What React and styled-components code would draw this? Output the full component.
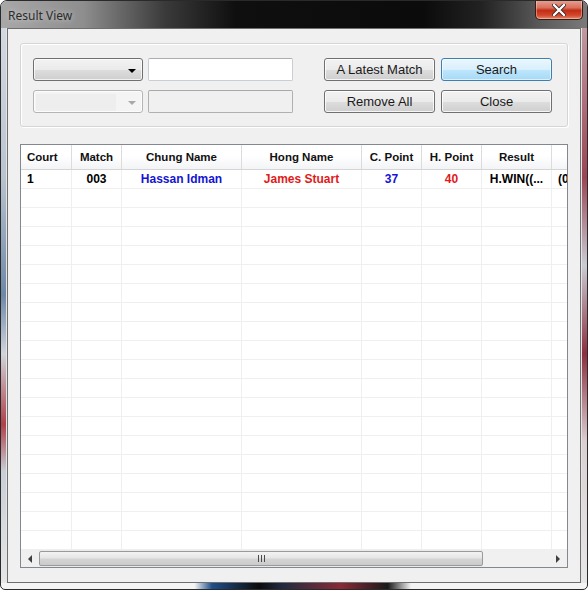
import React from 'react';
import styled, { createGlobalStyle } from 'styled-components';

const GlobalStyle = createGlobalStyle`
    html, body {
        margin: 0;
        padding: 0;
        background: #ffffff;
    }
    * {
        box-sizing: border-box;
    }
`

const Window = styled.div`
    width: 588px;
    height: 590px;
    display: flex;
    flex-direction: column;
    padding: 0 6px 6px 6px;
    border: 1px solid #2a2a2a;
    border-radius: 7px 7px 5px 5px;
    overflow: hidden;
    font-family: "Liberation Sans", Arial, sans-serif;
    background:
        linear-gradient(90deg, #f4f4f4 0%, #f4f4f4 33%, #1f4f8a 36%, #0c0c0c 44%, #202a40 48%, #8a2a36 58%, #1a1a1a 66%, #f4f4f4 70%, #f4f4f4 100%) bottom / 100% 6px no-repeat,
        linear-gradient(180deg, #d8dde4 0%, #b9c3d0 30%, #6d88a8 50%, #d0d5dc 60%, #b0404a 72%, #c8ced6 80%, #e8e8e8 100%) left / 5px 100% no-repeat,
        linear-gradient(180deg, #c7a8ae 0%, #9a4656 30%, #c9ccd4 45%, #8c3040 60%, #dad0d2 75%, #e8e8e8 100%) right / 5px 100% no-repeat,
        #e4e4e4;
`

const TitleBar = styled.div`
    height: 28px;
    margin: 0 -6px;
    padding: 0 4px 0 7px;
    display: flex;
    align-items: flex-start;
    justify-content: space-between;
    background: linear-gradient(90deg, #a8a8a8 0%, #8e8e8e 14%, #3a3a3a 28%, #0f0f0f 40%, #0b0b0b 72%, #222 82%, #5a5a5a 92%, #7a7a7a 100%);
`

const Title = styled.span`
    margin-top: 6px;
    font-family: "Noto Sans", "DejaVu Sans", sans-serif;
    font-size: 12px;
    color: #2c2c2c;
    text-shadow: 0 0 6px rgba(255,255,255,0.6);
`

const CloseButton = styled.div`
    width: 48px;
    height: 20px;
    margin-top: -1px;
    border: 1px solid #3a1a14;
    border-top: none;
    border-radius: 0 0 5px 5px;
    display: flex;
    align-items: center;
    justify-content: center;
    background: linear-gradient(180deg, #e8a496 0%, #d9705c 40%, #c22d16 55%, #d2462c 80%, #e08a6c 100%);
    box-shadow: inset 0 0 0 1px rgba(255,255,255,0.35);
`

const Client = styled.div`
    flex: 1;
    display: flex;
    flex-direction: column;
    gap: 17px;
    padding: 14px 12px 14px 12px;
    background: #f0f0f0;
    border: 1px solid #6e6e6e;
`

const GroupBox = styled.div`
    height: 84px;
    display: flex;
    justify-content: space-between;
    padding: 14px 15px 0 12px;
    border: 1px solid #d5d5d5;
    border-radius: 3px;
    box-shadow: inset 1px 1px 0 #ffffff, 1px 1px 0 #ffffff;
`

const Grid = styled.div`
    display: grid;
    grid-template-columns: ${p => p.cols};
    grid-auto-rows: 23px;
    column-gap: ${p => p.gap}px;
    row-gap: 9px;
`

const Combo = styled.div`
    border: 1px solid ${p => (p.disabled ? '#b5b5b5' : '#707070')};
    border-radius: 3px;
    background: ${p => (p.disabled
        ? 'linear-gradient(#f4f4f4, #f4f4f4)'
        : 'linear-gradient(180deg, #f2f2f2 0%, #ebebeb 50%, #dddddd 51%, #cfcfcf 100%)')};
    box-shadow: inset 0 0 0 1px ${p => (p.disabled ? '#fcfcfc' : 'rgba(255,255,255,0.7)')};
    display: flex;
    align-items: center;
    justify-content: flex-end;
    padding: 2px 6px 0 2px;
`

const ComboFace = styled.div`
    flex: 1;
    height: 17px;
    margin-right: 12px;
    background: #eeeeee;
`

const Arrow = styled.span`
    width: 0;
    height: 0;
    border-left: 4px solid transparent;
    border-right: 4px solid transparent;
    border-top: 4px solid ${p => (p.disabled ? '#a8a8a8' : '#000')};
`

const TextBox = styled.div`
    border: 1px solid ${p => (p.disabled ? '#b0b0b0' : '#c9cdd4')};
    border-top-color: ${p => (p.disabled ? '#a8a8a8' : '#abadb3')};
    border-radius: 2px;
    background: ${p => (p.disabled ? '#f0f0f0' : '#ffffff')};
`

const Button = styled.button`
    margin: 0;
    padding: 0;
    font-family: "Liberation Sans", Arial, sans-serif;
    font-size: 13px;
    color: #1a1a1a;
    border: 1px solid ${p => (p.primary ? '#3c7fb1' : '#707070')};
    border-radius: 3px;
    background: ${p => (p.primary
        ? 'linear-gradient(180deg, #eaf6fd 0%, #d9f0fc 50%, #bee6fd 51%, #a7d9f5 100%)'
        : 'linear-gradient(180deg, #f2f2f2 0%, #ebebeb 50%, #dddddd 51%, #cfcfcf 100%)')};
    box-shadow: inset 0 0 0 1px ${p => (p.primary ? 'rgba(255,255,255,0.6)' : 'rgba(255,255,255,0.8)')};
`

const ListView = styled.div`
    flex: 1;
    display: flex;
    flex-direction: column;
    border: 1px solid #828790;
    background: #ffffff;
    overflow: hidden;
`

const columns = '51px 50px 120px 120px 60px 60px 70px 80px';

const HeaderRow = styled.div`
    display: grid;
    grid-template-columns: ${columns};
    height: 25px;
    flex-shrink: 0;
    background: linear-gradient(180deg, #ffffff 0%, #ffffff 45%, #f3f4f6 100%);
    border-bottom: 1px solid #d5d5d5;
`

const HeaderCell = styled.div`
    display: flex;
    align-items: center;
    justify-content: ${p => (p.left ? 'flex-start' : 'center')};
    padding-left: ${p => (p.left ? '6px' : '0')};
    border-right: 1px solid #dcdcdc;
    font-size: 11.5px;
    font-weight: bold;
    color: #111;
    white-space: nowrap;
`

const Body = styled.div`
    flex: 1;
    overflow: hidden;
`

const Row = styled.div`
    display: grid;
    grid-template-columns: ${columns};
    height: 19px;
    border-bottom: 1px solid #efefef;
`

const Cell = styled.div`
    display: flex;
    align-items: center;
    justify-content: ${p => (p.left ? 'flex-start' : 'center')};
    padding-left: ${p => (p.left ? '6px' : '0')};
    border-right: 1px solid #efefef;
    font-size: 12px;
    font-weight: bold;
    color: ${p => p.color || '#000'};
    white-space: nowrap;
    overflow: hidden;
`

const ScrollBar = styled.div`
    height: 17px;
    flex-shrink: 0;
    display: flex;
    align-items: stretch;
    background: #eaeaea;
`

const ScrollArrow = styled.div`
    width: 18px;
    display: flex;
    align-items: center;
    justify-content: center;
    background: #f0f0f0;
`

const ArrowHead = styled.span`
    width: 0;
    height: 0;
    border-top: 4px solid transparent;
    border-bottom: 4px solid transparent;
    ${p => (p.right ? 'border-left: 4px solid #404040;' : 'border-right: 4px solid #404040;')}
`

const Thumb = styled.div`
    width: 444px;
    margin: 1px 0;
    border: 1px solid #9a9a9a;
    border-radius: 2px;
    background: linear-gradient(180deg, #f3f3f3 0%, #e6e6e6 45%, #d4d4d4 55%, #cbcbcb 100%);
    display: flex;
    align-items: center;
    justify-content: center;
`

const Grip = styled.span`
    width: 7px;
    height: 7px;
    background: repeating-linear-gradient(90deg, #4a4a4a 0 1px, transparent 1px 3px);
`

const Track = styled.div`
    flex: 1;
    background: #f0f0f0;
`

const headers = ['Court', 'Match', 'Chung Name', 'Hong Name', 'C. Point', 'H. Point', 'Result', ''];

const App = () => {
    const empty = Array.from({ length: 19 });

    return (
        <Window>
            <GlobalStyle />
            <TitleBar>
                <Title>Result View</Title>
                <CloseButton>
                    <svg width="14" height="12" viewBox="0 0 14 12">
                        <path d="M2 1 L12 11 M12 1 L2 11" stroke="#3a2a26" strokeWidth="4" strokeLinecap="round" />
                        <path d="M2 1 L12 11 M12 1 L2 11" stroke="#ffffff" strokeWidth="2.4" strokeLinecap="round" />
                    </svg>
                </CloseButton>
            </TitleBar>
            <Client>
                <GroupBox>
                    <Grid cols="110px 145px" gap={5}>
                        <Combo><Arrow /></Combo>
                        <TextBox />
                        <Combo disabled><ComboFace /><Arrow disabled /></Combo>
                        <TextBox disabled />
                    </Grid>
                    <Grid cols="111px 111px" gap={6}>
                        <Button>A Latest Match</Button>
                        <Button primary>Search</Button>
                        <Button>Remove All</Button>
                        <Button>Close</Button>
                    </Grid>
                </GroupBox>
                <ListView>
                    <HeaderRow>
                        {headers.map((h, i) => (
                            <HeaderCell key={i} left={i === 0}>{h}</HeaderCell>
                        ))}
                    </HeaderRow>
                    <Body>
                        <Row>
                            <Cell left>1</Cell>
                            <Cell>003</Cell>
                            <Cell color="#1414d2">Hassan Idman</Cell>
                            <Cell color="#e01a1a">James Stuart</Cell>
                            <Cell color="#1414d2">37</Cell>
                            <Cell color="#e01a1a">40</Cell>
                            <Cell>H.WIN((...</Cell>
                            <Cell left>(00:00)</Cell>
                        </Row>
                        {empty.map((_, i) => (
                            <Row key={i}>
                                {headers.map((h, j) => <Cell key={j} />)}
                            </Row>
                        ))}
                    </Body>
                    <ScrollBar>
                        <ScrollArrow><ArrowHead /></ScrollArrow>
                        <Thumb><Grip /></Thumb>
                        <Track />
                        <ScrollArrow><ArrowHead right /></ScrollArrow>
                    </ScrollBar>
                </ListView>
            </Client>
        </Window>
    )
}

export default App
